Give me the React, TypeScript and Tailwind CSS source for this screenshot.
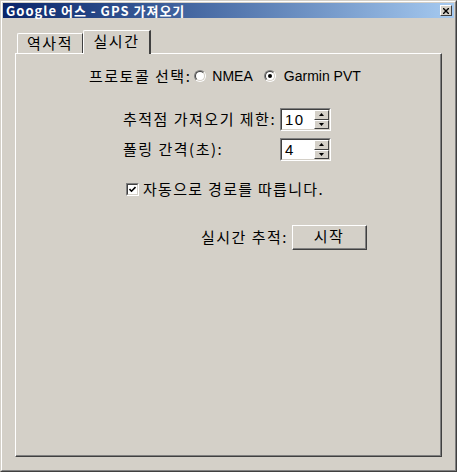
import React from "react";

const ko = { fontFamily: '"Noto Sans CJK KR", "Liberation Sans", sans-serif' };
const lat = { fontFamily: '"Liberation Sans", "Noto Sans CJK KR", sans-serif' };

const Radio = ({ on }: { on?: boolean }) => (
  <span className="flex h-[12px] w-[12px] items-center justify-center rounded-full border border-t-[#808080] border-l-[#808080] border-b-white border-r-white">
    <span className="flex h-[10px] w-[10px] items-center justify-center rounded-full border border-t-[#404040] border-l-[#404040] border-b-[#d4d0c8] border-r-[#d4d0c8] bg-white">
      {on && <span className="h-[4px] w-[4px] rounded-full bg-black" />}
    </span>
  </span>
);

const Spinner = ({ value }: { value: string }) => (
  <div className="flex h-[23px] w-[51px] border border-t-[#808080] border-l-[#808080] border-b-white border-r-white">
    <div className="flex flex-1 border border-t-[#404040] border-l-[#404040] border-b-[#d4d0c8] border-r-[#d4d0c8] bg-white">
      <div className="flex flex-1 items-center pl-[3px] text-[15px] leading-none text-black" style={lat}>
        {value}
      </div>
      <div className="flex w-[15px] flex-col">
        {["up", "down"].map((d) => (
          <div
            key={d}
            className="flex flex-1 items-center justify-center border border-t-white border-l-white border-b-[#404040] border-r-[#404040] bg-[#d4d0c8]"
          >
            <svg width="5" height="3" viewBox="0 0 5 3">
              {d === "up" ? <path d="M2.5 0 L5 3 L0 3 Z" fill="#000" /> : <path d="M0 0 L5 0 L2.5 3 Z" fill="#000" />}
            </svg>
          </div>
        ))}
      </div>
    </div>
  </div>
);

export default function App() {
  return (
    <div className="h-[472px] w-[457px] border border-t-[#d4d0c8] border-l-[#d4d0c8] border-b-[#404040] border-r-[#404040] bg-[#d4d0c8]">
      <div className="flex h-full flex-col border border-t-white border-l-white border-b-[#808080] border-r-[#808080] p-px">
        {/* title bar */}
        <div className="flex h-[15px] items-center justify-between bg-gradient-to-r from-[#0a246a] to-[#a6caf0] pl-[3px] pr-[2px]">
          <span className="text-[13px] font-bold leading-none tracking-[1px] text-white" style={ko}>
            Google 어스 - GPS 가져오기
          </span>
          <div className="flex h-[11px] w-[12px] items-center justify-center border border-t-white border-l-white border-b-[#404040] border-r-[#404040] bg-[#d4d0c8]">
            <svg width="6" height="6" viewBox="0 0 6 6">
              <path d="M0 0 L6 6 M6 0 L0 6" stroke="#000" strokeWidth="1.4" />
            </svg>
          </div>
        </div>

        {/* body */}
        <div className="flex flex-1 flex-col px-[12px] pb-[12px] pt-[12px]">
          <div className="relative z-10 flex h-[23px] items-end pl-[2px]">
            <div
              className="flex h-[20px] w-[66px] items-center justify-center rounded-tl-[2px] border-l border-t border-l-white border-t-white border-r border-r-[#404040] text-[15px] tracking-[1.5px] text-black"
              style={ko}
            >
              역사적
            </div>
            <div
              className="-mb-px flex h-[24px] w-[68px] items-center justify-center rounded-tl-[2px] border-l border-t border-l-white border-t-white border-r-2 border-r-[#404040] bg-[#d4d0c8] pb-[2px] text-[15px] tracking-[1.5px] text-black"
              style={ko}
            >
              실시간
            </div>
          </div>

          <div className="flex flex-1 flex-col border border-t-white border-l-white border-b-[#404040] border-r-[#404040] text-[15px] tracking-[1.5px] text-black">
            <div className="flex flex-1 flex-col border-b border-r border-b-[#808080] border-r-[#808080]">
              {/* protocol */}
              <div className="mt-[12px] flex h-[20px] items-center pl-[73px]">
                <span style={ko}>프로토콜 선택:</span>
                <span className="ml-[3px]"><Radio /></span>
                <span className="ml-[6px] text-[14px] tracking-normal" style={lat}>NMEA</span>
                <span className="ml-[11px]"><Radio on /></span>
                <span className="ml-[8px] text-[14px] tracking-normal" style={lat}>Garmin PVT</span>
              </div>

              {/* limit */}
              <div className="mt-[22px] flex items-center pl-[107px]">
                <span className="w-[157px]" style={ko}>추적점 가져오기 제한:</span>
                <Spinner value="10" />
              </div>

              {/* poll */}
              <div className="mt-[7px] flex items-center pl-[107px]">
                <span className="w-[157px]" style={ko}>폴링 간격(초):</span>
                <Spinner value="4" />
              </div>

              {/* follow */}
              <div className="mt-[17px] flex items-center pl-[110px]">
                <span className="flex h-[13px] w-[13px] border border-t-[#808080] border-l-[#808080] border-b-white border-r-white">
                  <span className="flex flex-1 items-center justify-center border border-t-[#404040] border-l-[#404040] border-b-[#d4d0c8] border-r-[#d4d0c8] bg-white">
                    <svg width="7" height="7" viewBox="0 0 7 7">
                      <path d="M0.5 3 L2.5 5.2 L6.5 1" stroke="#000" strokeWidth="1.6" fill="none" />
                    </svg>
                  </span>
                </span>
                <span className="ml-[4px] tracking-[1.3px]" style={ko}>자동으로 경로를 따릅니다.</span>
              </div>

              {/* realtime */}
              <div className="mt-[24px] flex items-center pl-[185px]">
                <span style={ko}>실시간 추적:</span>
                <button className="ml-[4px] flex h-[25px] w-[75px] border border-t-white border-l-white border-b-[#404040] border-r-[#404040] bg-[#d4d0c8]">
                  <span className="flex flex-1 items-center justify-center border-b border-r border-b-[#808080] border-r-[#808080] text-[15px] tracking-[1.5px]" style={ko}>
                    시작
                  </span>
                </button>
              </div>
            </div>
          </div>
        </div>
      </div>
    </div>
  );
}
